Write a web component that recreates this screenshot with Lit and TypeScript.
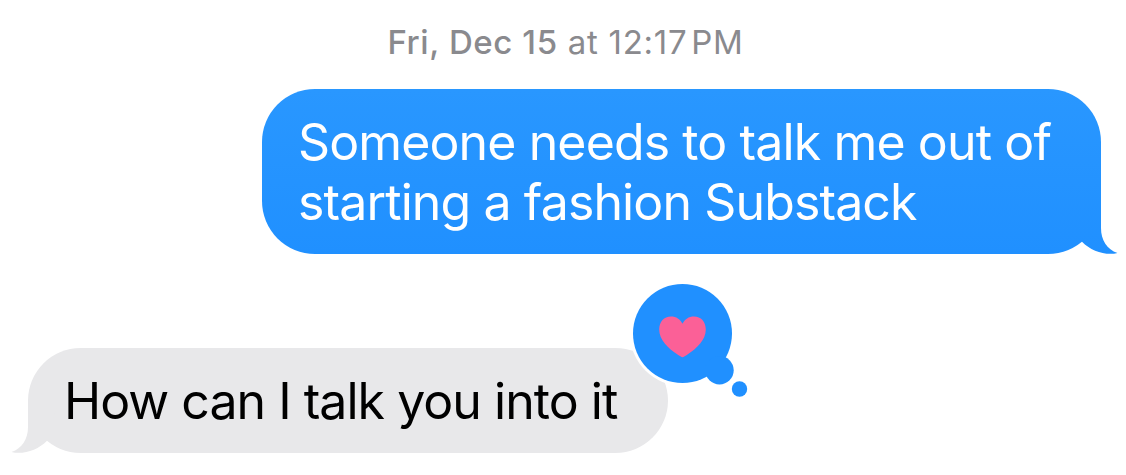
import { LitElement, html, css, svg } from 'lit';
import { customElement, property } from 'lit/decorators.js';

@customElement('chat-tapback')
class ChatTapback extends LitElement {

    static styles = css`
        :host {
            display: block;
            width: 116px;
            height: 116px;
        }

        svg {
            display: block;
            overflow: visible;
        }
    `

    render() {
        return html`
            <svg width="116" height="116" viewBox="0 0 116 116">
                <circle cx="49.5" cy="49.5" r="52.5" fill="#fff" />
                <g fill="#2090ff">
                    <circle cx="49.5" cy="49.5" r="49.5" />
                    <circle cx="86.5" cy="86.2" r="14.2" />
                    <circle cx="106.5" cy="105" r="7.7" />
                </g>
                <path
                    fill="#fb6097"
                    d="M49.5 73.2 C48.5 73.2 46.5 72 44.5 70.6 C35 64.3 26.2 56 26.2 45.6 C26.2 37.8 31 32.5 38 32.5 C43.2 32.5 47.3 35.2 49.5 39.8 C51.7 35.2 55.8 32.5 61 32.5 C68 32.5 72.8 37.8 72.8 45.6 C72.8 56 64 64.3 54.5 70.6 C52.5 72 50.5 73.2 49.5 73.2 Z"
                />
            </svg>
        `;
    }
}

@customElement('chat-bubble')
class ChatBubble extends LitElement {

    @property({ type: Boolean, reflect: true }) sent = false;

    static styles = css`
        :host {
            display: block;
            position: relative;
            box-sizing: border-box;
            padding: 23px 36px 22px;
            border-radius: 53px;
            background: #e8e8ea;
            color: #000;
            font-size: 50px;
            line-height: 60px;
            letter-spacing: -0.97px;
            white-space: nowrap;
        }

        :host([sent]) {
            background: linear-gradient(#2997ff, #2090ff);
            color: #fff;
            letter-spacing: -0.88px;
        }

        .tail {
            position: absolute;
            bottom: 0;
            left: -17px;
            transform: scaleX(-1);
            display: block;
        }

        :host([sent]) .tail {
            left: auto;
            right: -17px;
            transform: none;
        }

        ::slotted(chat-tapback) {
            position: absolute;
            top: -64px;
            right: -81px;
        }
    `

    render() {
        // the gradient continues the lower part of the bubble
        const fill = this.sent ? 'url(#sent)' : '#e8e8ea';
        return html`
            <svg class="tail" width="58" height="60" viewBox="0 0 58 60">
                ${this.sent ? svg`
                    <linearGradient id="sent" gradientUnits="userSpaceOnUse" x1="0" y1="-105" x2="0" y2="60">
                        <stop offset="0" stop-color="#2997ff" />
                        <stop offset="1" stop-color="#2090ff" />
                    </linearGradient>
                ` : ''}
                <path fill=${fill} d="M41 6 V34 C41 46 47 55.5 57.5 59 C46 62 31 57 22 47.7 L10 6 Z" />
            </svg>
            <slot></slot>
        `;
    }
}

@customElement('app-root')
class AppRoot extends LitElement {

    static styles = css`
        :host {
            display: flex;
            flex-direction: column;
            box-sizing: border-box;
            width: 100%;
            height: 475px;
            padding: 22px 25px 0 28px;
            overflow: hidden;
            background: #fff;
            font-family: Inter, "Liberation Sans", sans-serif;
        }

        .date {
            align-self: center;
            height: 40px;
            margin-bottom: 27px;
            padding-left: 2px;
            color: #8a8a8e;
            font-size: 33px;
            line-height: 40px;
            letter-spacing: 0.75px;
            white-space: nowrap;
        }

        .day {
            font-weight: 500;
            letter-spacing: 0.6px;
        }

        .line {
            display: block;
        }

        .sent {
            align-self: flex-end;
            width: 839px;
            height: 165px;
        }

        .received {
            align-self: flex-start;
            width: 640px;
            height: 105px;
            margin-top: 94px;
        }
    `

    render() {
        return html`
            <div class="date"><span class="day">Fri, Dec 15</span> <span class="time">at 12:17&#8202;PM</span></div>
            <chat-bubble class="sent" sent>
                <span class="line">Someone needs to talk me out of</span>
                <span class="line">starting a fashion Substack</span>
            </chat-bubble>
            <chat-bubble class="received">
                <span class="line">How can I talk you into it</span>
                <chat-tapback></chat-tapback>
            </chat-bubble>
        `;
    }
}
